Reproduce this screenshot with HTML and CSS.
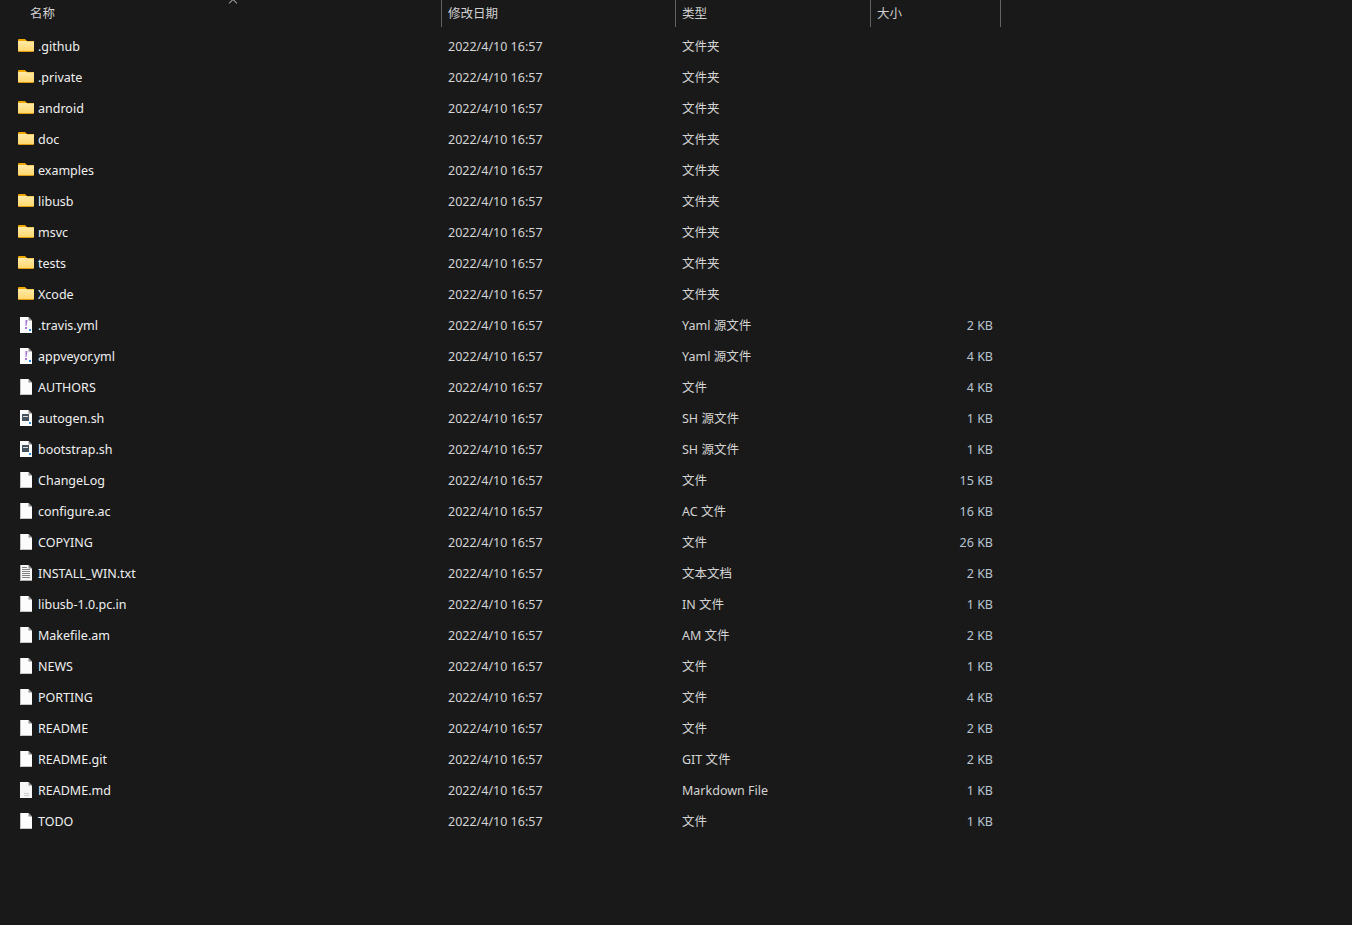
FILE: index.html
```html
<!DOCTYPE html>
<html lang="zh-CN">

<head>
    <meta charset="UTF-8">
    <title>libusb</title>
    <link rel="stylesheet" href="styles.css">
</head>

<body>
    <svg class="defs" width="0" height="0">
        <defs>
            <linearGradient id="folder-body" x1="0" y1="0" x2="0" y2="1">
                <stop offset="0" stop-color="#ffeaa8"/>
                <stop offset="1" stop-color="#ffd86e"/>
            </linearGradient>
        </defs>
        <symbol id="folder" viewBox="0 0 16 13">
            <path d="M0 1Q0 0 1 0H7L9 2H16V3H0Z" fill="#f0a800"/>
            <path d="M0 2H8.500L9 2.500H16V12H0Z" fill="url(#folder-body)"/>
            <path d="M0 12H16Q16 13 15 13H1Q0 13 0 12Z" fill="#e09a10"/>
        </symbol>
        <symbol id="blank" viewBox="0 0 12 16">
            <path d="M0 0H8.500L12 3.500V16H0Z" fill="#fcfcfc"/>
            <path d="M8.500 0V3.500H12Z" fill="#8a8a8a"/>
            <path d="M.5 0V15.500H12" fill="none" stroke="#c4c4c4"/>
        </symbol>
        <symbol id="yaml" viewBox="0 0 12 16">
            <path d="M0 0H8.500L12 3.500V16H0Z" fill="#fcfcfc"/>
            <path d="M8.500 0V3.500H12Z" fill="#8a8a8a"/>
            <path d="M5.500 3H7.500L6.500 9H5.500Z" fill="#a874d8"/>
            <rect x="5" y="10" width="2" height="2" fill="#a874d8"/>
            <rect x="9" y="12" width="2" height="2" fill="#2f8fdf"/>
        </symbol>
        <symbol id="shell" viewBox="0 0 12 16">
            <path d="M0 0H8.500L12 3.500V16H0Z" fill="#fcfcfc"/>
            <path d="M8.500 0V3.500H12Z" fill="#8a8a8a"/>
            <rect x="2" y="4" width="7" height="7" fill="#45525e"/>
            <rect x="3" y="6" width="5" height="1" fill="#d8dde2"/>
            <rect x="9" y="12" width="2" height="2" fill="#2f8fdf"/>
        </symbol>
        <symbol id="text" viewBox="0 0 12 16">
            <path d="M0 0H8.500L12 3.500V16H0Z" fill="#f8f8f8"/>
            <path d="M8.500 0V3.500H12Z" fill="#8a8a8a"/>
            <path d="M2 2.500H7M2 4.500H10M2 6.500H10M2 8.500H10M2 10.500H10M2 12.500H10" stroke="#808080"/>
            <path d="M.5 0V15.500H12" fill="none" stroke="#b0b0b0"/>
        </symbol>
        <symbol id="markdown" viewBox="0 0 12 16">
            <path d="M0 0H8.500L12 3.500V16H0Z" fill="#f6f6f6"/>
            <path d="M8.500 0V3.500H12Z" fill="#8a8a8a"/>
            <path d="M4 11.500H9M4 13.500H9" stroke="#cccccc"/>
        </symbol>
    </svg>

    <div class="header">
        <div class="col-head col-name">名称<span class="sort-arrow"></span></div>
        <div class="col-head">修改日期</div>
        <div class="col-head">类型</div>
        <div class="col-head">大小</div>
    </div>

    <div class="rows">
        <div class="row"><span class="name"><svg class="ico-folder"><use href="#folder"/></svg>.github</span><span>2022/4/10 16:57</span><span>文件夹</span><span class="size"></span></div>
        <div class="row"><span class="name"><svg class="ico-folder"><use href="#folder"/></svg>.private</span><span>2022/4/10 16:57</span><span>文件夹</span><span class="size"></span></div>
        <div class="row"><span class="name"><svg class="ico-folder"><use href="#folder"/></svg>android</span><span>2022/4/10 16:57</span><span>文件夹</span><span class="size"></span></div>
        <div class="row"><span class="name"><svg class="ico-folder"><use href="#folder"/></svg>doc</span><span>2022/4/10 16:57</span><span>文件夹</span><span class="size"></span></div>
        <div class="row"><span class="name"><svg class="ico-folder"><use href="#folder"/></svg>examples</span><span>2022/4/10 16:57</span><span>文件夹</span><span class="size"></span></div>
        <div class="row"><span class="name"><svg class="ico-folder"><use href="#folder"/></svg>libusb</span><span>2022/4/10 16:57</span><span>文件夹</span><span class="size"></span></div>
        <div class="row"><span class="name"><svg class="ico-folder"><use href="#folder"/></svg>msvc</span><span>2022/4/10 16:57</span><span>文件夹</span><span class="size"></span></div>
        <div class="row"><span class="name"><svg class="ico-folder"><use href="#folder"/></svg>tests</span><span>2022/4/10 16:57</span><span>文件夹</span><span class="size"></span></div>
        <div class="row"><span class="name"><svg class="ico-folder"><use href="#folder"/></svg>Xcode</span><span>2022/4/10 16:57</span><span>文件夹</span><span class="size"></span></div>
        <div class="row"><span class="name"><svg class="ico-file"><use href="#yaml"/></svg>.travis.yml</span><span>2022/4/10 16:57</span><span>Yaml 源文件</span><span class="size">2 KB</span></div>
        <div class="row"><span class="name"><svg class="ico-file"><use href="#yaml"/></svg>appveyor.yml</span><span>2022/4/10 16:57</span><span>Yaml 源文件</span><span class="size">4 KB</span></div>
        <div class="row"><span class="name"><svg class="ico-file"><use href="#blank"/></svg>AUTHORS</span><span>2022/4/10 16:57</span><span>文件</span><span class="size">4 KB</span></div>
        <div class="row"><span class="name"><svg class="ico-file"><use href="#shell"/></svg>autogen.sh</span><span>2022/4/10 16:57</span><span>SH 源文件</span><span class="size">1 KB</span></div>
        <div class="row"><span class="name"><svg class="ico-file"><use href="#shell"/></svg>bootstrap.sh</span><span>2022/4/10 16:57</span><span>SH 源文件</span><span class="size">1 KB</span></div>
        <div class="row"><span class="name"><svg class="ico-file"><use href="#blank"/></svg>ChangeLog</span><span>2022/4/10 16:57</span><span>文件</span><span class="size">15 KB</span></div>
        <div class="row"><span class="name"><svg class="ico-file"><use href="#blank"/></svg>configure.ac</span><span>2022/4/10 16:57</span><span>AC 文件</span><span class="size">16 KB</span></div>
        <div class="row"><span class="name"><svg class="ico-file"><use href="#blank"/></svg>COPYING</span><span>2022/4/10 16:57</span><span>文件</span><span class="size">26 KB</span></div>
        <div class="row"><span class="name"><svg class="ico-file"><use href="#text"/></svg>INSTALL_WIN.txt</span><span>2022/4/10 16:57</span><span>文本文档</span><span class="size">2 KB</span></div>
        <div class="row"><span class="name"><svg class="ico-file"><use href="#blank"/></svg>libusb-1.0.pc.in</span><span>2022/4/10 16:57</span><span>IN 文件</span><span class="size">1 KB</span></div>
        <div class="row"><span class="name"><svg class="ico-file"><use href="#blank"/></svg>Makefile.am</span><span>2022/4/10 16:57</span><span>AM 文件</span><span class="size">2 KB</span></div>
        <div class="row"><span class="name"><svg class="ico-file"><use href="#blank"/></svg>NEWS</span><span>2022/4/10 16:57</span><span>文件</span><span class="size">1 KB</span></div>
        <div class="row"><span class="name"><svg class="ico-file"><use href="#blank"/></svg>PORTING</span><span>2022/4/10 16:57</span><span>文件</span><span class="size">4 KB</span></div>
        <div class="row"><span class="name"><svg class="ico-file"><use href="#blank"/></svg>README</span><span>2022/4/10 16:57</span><span>文件</span><span class="size">2 KB</span></div>
        <div class="row"><span class="name"><svg class="ico-file"><use href="#blank"/></svg>README.git</span><span>2022/4/10 16:57</span><span>GIT 文件</span><span class="size">2 KB</span></div>
        <div class="row"><span class="name"><svg class="ico-file"><use href="#markdown"/></svg>README.md</span><span>2022/4/10 16:57</span><span>Markdown File</span><span class="size">1 KB</span></div>
        <div class="row"><span class="name"><svg class="ico-file"><use href="#blank"/></svg>TODO</span><span>2022/4/10 16:57</span><span>文件</span><span class="size">1 KB</span></div>
    </div>
</body>

</html>
```

FILE: styles.css
```css
html,
body {
    height: 100%;
}

body {
    margin: 0;
    background: #191919;
    color: #dcdcdc;
    font-family: "Noto Sans", "Noto Sans CJK SC", sans-serif;
    font-size: 12.5px;
    overflow: hidden;
}

.defs {
    position: absolute;
}

.header {
    display: grid;
    grid-template-columns: 441px 235px 195px 130px;
    width: 1001px;
    height: 27px;
}

.col-head {
    position: relative;
    border-right: 1px solid #636363;
    padding: 5px 0 0 6px;
    line-height: 18px;
    color: #d0d0d0;
}

.col-name {
    padding-left: 30px;
    border-right: 0;
}

.col-head:nth-child(2) {
    border-left: 1px solid #636363;
}

.sort-arrow {
    position: absolute;
    left: 230px;
    top: 0;
    width: 5px;
    height: 5px;
    border-left: 1px solid #a0a0a0;
    border-top: 1px solid #a0a0a0;
    transform: rotate(45deg);
}

.rows {
    padding-top: 4px;
}

.row {
    display: grid;
    grid-template-columns: 441px 234px 195px 130px;
    width: 1000px;
    height: 31px;
    align-items: center;
    line-height: 18px;
}

.row > span {
    padding-left: 7px;
    white-space: nowrap;
    color: #d4d4d4;
}

.row > .name {
    display: flex;
    align-items: center;
    padding-left: 18px;
    color: #f0f0f0;
}

.row > .size {
    padding: 0 7px 0 0;
    text-align: right;
    color: #b8c4d0;
}

.ico-folder {
    width: 16px;
    height: 13px;
    margin: 0 4px 2px 0;
}

.ico-file {
    width: 12px;
    height: 16px;
    margin: 0 6px 1px 2px;
}
```
